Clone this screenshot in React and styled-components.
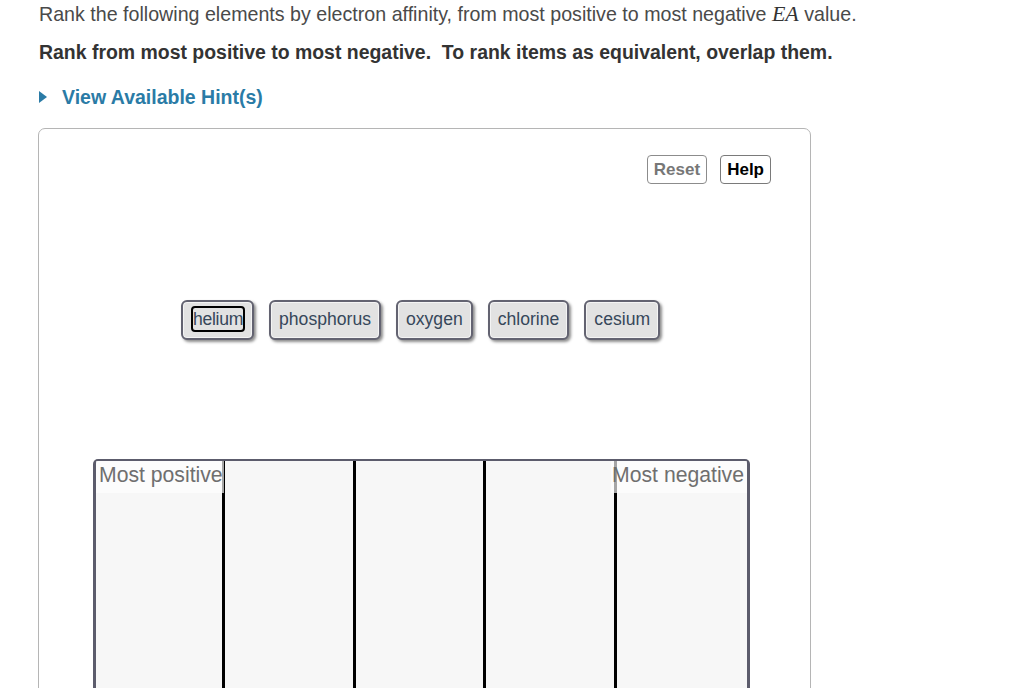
import React from "react";
import styled, { createGlobalStyle } from "styled-components";

const Global = createGlobalStyle`
  html, body { margin: 0; padding: 0; background: #fff; }
  body { font-family: "Liberation Sans", Arial, sans-serif; overflow: hidden; }
`;

const Page = styled.div`
  padding: 2px 0 0 39px;
  width: 1030px;
  height: 688px;
  box-sizing: border-box;
  overflow: hidden;
`;

const Prompt = styled.p`
  margin: 0;
  font-size: 19.65px;
  line-height: 24px;
  color: #4a4a4a;
`;

const MathVar = styled.span`
  font-family: "Liberation Serif", "Times New Roman", serif;
  font-style: italic;
  font-size: 22px;
  color: #333;
`;

const Instruction = styled.p`
  margin: 14px 0 0;
  font-size: 19.45px;
  line-height: 24px;
  font-weight: bold;
  color: #333;
`;

const HintToggle = styled.div`
  margin-top: 21px;
  display: flex;
  align-items: center;
  gap: 15px;
  color: #2a7ba6;
  font-weight: bold;
  font-size: 19.5px;
  line-height: 24px;
`;

const Triangle = styled.span`
  width: 0;
  height: 0;
  border-top: 6px solid transparent;
  border-bottom: 6px solid transparent;
  border-left: 8px solid #2a7ba6;
`;

const Panel = styled.div`
  margin: 19px 0 0 -1px;
  width: 773px;
  height: 600px;
  box-sizing: border-box;
  border: 1px solid #b5b5b5;
  border-radius: 7px;
  padding: 26px 39px 0 54px;
`;

const Toolbar = styled.div`
  display: flex;
  justify-content: flex-end;
  gap: 13px;
`;

const ToolButton = styled.button`
  font-family: "Liberation Sans", Arial, sans-serif;
  font-weight: bold;
  font-size: 17px;
  height: 29px;
  padding: 0 6px;
  background: #fff;
  border: 1px solid ${(p) => (p.$muted ? "#8c8c8c" : "#7a7a7a")};
  border-radius: 4px;
  color: ${(p) => (p.$muted ? "#777" : "#000")};
`;

const ItemRow = styled.div`
  margin: 116px 0 0 88px;
  display: flex;
  gap: 15px;
`;

const Tile = styled.div`
  display: flex;
  align-items: center;
  justify-content: center;
  box-sizing: border-box;
  height: 40px;
  padding: 0 0 2px;
  padding-left: ${(p) => (p.$focused ? "7px" : "8px")};
  padding-right: ${(p) => (p.$focused ? "7px" : "8px")};
  background: #e2e2e2;
  border: 2px solid #636371;
  border-radius: 6px;
  box-shadow: inset 0 0 0 1px #f4f4f4, 2px 2px 3px rgba(0, 0, 0, 0.45);
  font-size: 17.6px;
  color: #36475a;
`;

const FocusLabel = styled.span`
  border: 2px solid #000;
  border-radius: 4px;
  margin-left: 1px;
  padding: 0;
  line-height: 22px;
  letter-spacing: -0.3px;
  color: #36475a;
`;

const Ranking = styled.div`
  position: relative;
  margin-top: 119px;
  width: 657px;
  height: 260px;
  box-sizing: border-box;
  border-top: 2px solid #5c5c6c;
  border-left: 3px solid #5c5c6c;
  border-right: 3px solid #5c5c6c;
  border-radius: 5px 5px 0 0;
  background: #f7f7f7;
  display: grid;
  grid-template-columns: 126px 3px 128px 3px 127px 3px 128px 3px 1fr;
`;

const Column = styled.div``;

const Divider = styled.div`
  background: #000;
`;

const EndLabel = styled.div`
  position: absolute;
  top: 0;
  ${(p) => (p.$right ? "right: 0;" : "left: 0;")}
  padding: ${(p) => (p.$right ? "2px 3px 7px 1px" : "2px 1px 7px 3px")};
  font-size: 21.2px;
  line-height: 23px;
  color: #6f6f6f;
  background: rgba(255, 255, 255, 0.65);
`;

const items = ["phosphorus", "oxygen", "chlorine", "cesium"];

export default function App() {
  return (
    <>
      <Global />
      <Page>
        <Prompt>
          Rank the following elements by electron affinity, from most positive to most negative{" "}
          <MathVar>EA</MathVar> value.
        </Prompt>
        <Instruction>
          Rank from most positive to most negative.&nbsp; To rank items as equivalent, overlap them.
        </Instruction>
        <HintToggle>
          <Triangle />
          View Available Hint(s)
        </HintToggle>
        <Panel>
          <Toolbar>
            <ToolButton $muted>Reset</ToolButton>
            <ToolButton>Help</ToolButton>
          </Toolbar>
          <ItemRow>
            <Tile $focused>
              <FocusLabel>helium</FocusLabel>
            </Tile>
            {items.map((it) => (
              <Tile key={it}>{it}</Tile>
            ))}
          </ItemRow>
          <Ranking>
            <Column />
            <Divider />
            <Column />
            <Divider />
            <Column />
            <Divider />
            <Column />
            <Divider />
            <Column />
            <EndLabel>Most positive</EndLabel>
            <EndLabel $right>Most negative</EndLabel>
          </Ranking>
        </Panel>
      </Page>
    </>
  );
}
